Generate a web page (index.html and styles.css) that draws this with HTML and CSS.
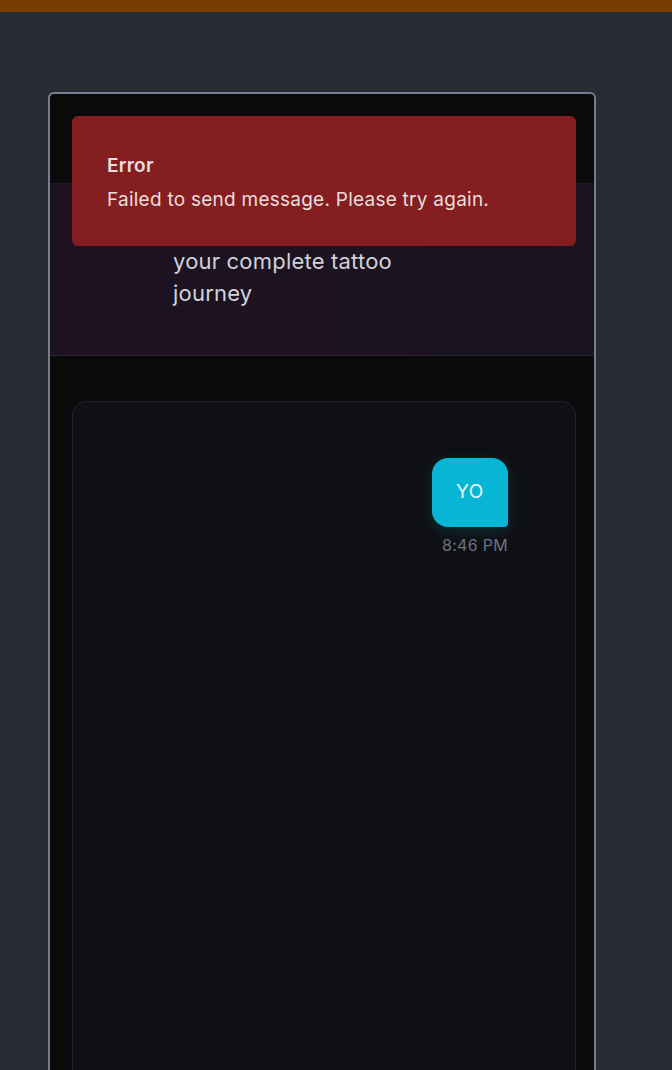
FILE: index.html
```html
<!DOCTYPE html>
<html lang="en">
<head>
    <meta charset="UTF-8">
    <meta name="viewport" content="width=device-width, initial-scale=1.0">
    <title>Tattoo Assistant Chat</title>
    <link rel="stylesheet" href="styles.css">
</head>
<body>

    <!-- top strip -->
    <div class="top-strip"></div>

    <div class="stage">
        <div class="phone">
            <!-- toolbar (behind the toast) -->
            <div class="toolbar"></div>

            <!-- header -->
            <div class="chat-header">
                <p class="tagline">your complete tattoo<br>journey</p>
            </div>

            <!-- chat body -->
            <div class="chat-body">
                <div class="chat-card">
                    <div class="message user">
                        <div class="bubble">YO</div>
                        <div class="time">8:46 PM</div>
                    </div>
                </div>
            </div>

            <!-- error toast -->
            <div class="toast">
                <div class="toast-title">Error</div>
                <div class="toast-text">Failed to send message. Please try again.</div>
            </div>
        </div>
    </div>

</body>
</html>
```

FILE: styles.css
```css
body {
    margin: 0;
    background-color: #282c34;
    font-family: 'Inter', 'Noto Sans', sans-serif;
    height: 100vh;
    overflow: hidden;
}

.top-strip {
    height: 12px;
    background-color: #783c00;
}

.stage {
    padding: 80px 0 0 48px;
}

.phone {
    position: relative;
    width: 544px;
    min-height: 1000px;
    background-color: #0a0a0a;
    border: 2px solid #767e8e;
    border-radius: 6px;
}

.toolbar {
    height: 89px;
}

.chat-header {
    background: linear-gradient(90deg, #1e1221, #1b1320);
    border-top: 1px solid #1c1a24;
    border-bottom: 1px solid #2a2736;
    padding: 61px 0 46px 123px;
}

.tagline {
    margin: 0;
    color: #d2d2da;
    font-size: 22px;
    line-height: 32px;
    letter-spacing: 0.2px;
}

.chat-body {
    padding: 45px 18px 0 22px;
}

.chat-card {
    background-color: #0f1014;
    border: 1px solid #1f2231;
    border-radius: 14px;
    min-height: 800px;
    padding: 56px 67px 0;
}

.message.user {
    display: flex;
    flex-direction: column;
    align-items: flex-end;
}

.bubble {
    background-color: #06b6d4;
    color: #e6f7fb;
    font-size: 19px;
    line-height: 28px;
    letter-spacing: 0.6px;
    padding: 20px 24px 21px;
    border-radius: 16px 16px 4px 16px;
    box-shadow: 0 4px 14px rgba(6, 182, 212, 0.18);
}

.time {
    margin-top: 6px;
    font-size: 16px;
    line-height: 24px;
    letter-spacing: 0.3px;
    color: #6b7280;
}

/* error toast */
.toast {
    position: absolute;
    top: 22px;
    left: 22px;
    width: 504px;
    box-sizing: border-box;
    background-color: #841e20;
    border-radius: 6px;
    padding: 36px 35px 32px;
    color: #e9dede;
    letter-spacing: 0.25px;
}

.toast-title {
    font-size: 19px;
    font-weight: 600;
    line-height: 28px;
    margin-bottom: 6px;
}

.toast-text {
    font-size: 19px;
    line-height: 28px;
}
```
